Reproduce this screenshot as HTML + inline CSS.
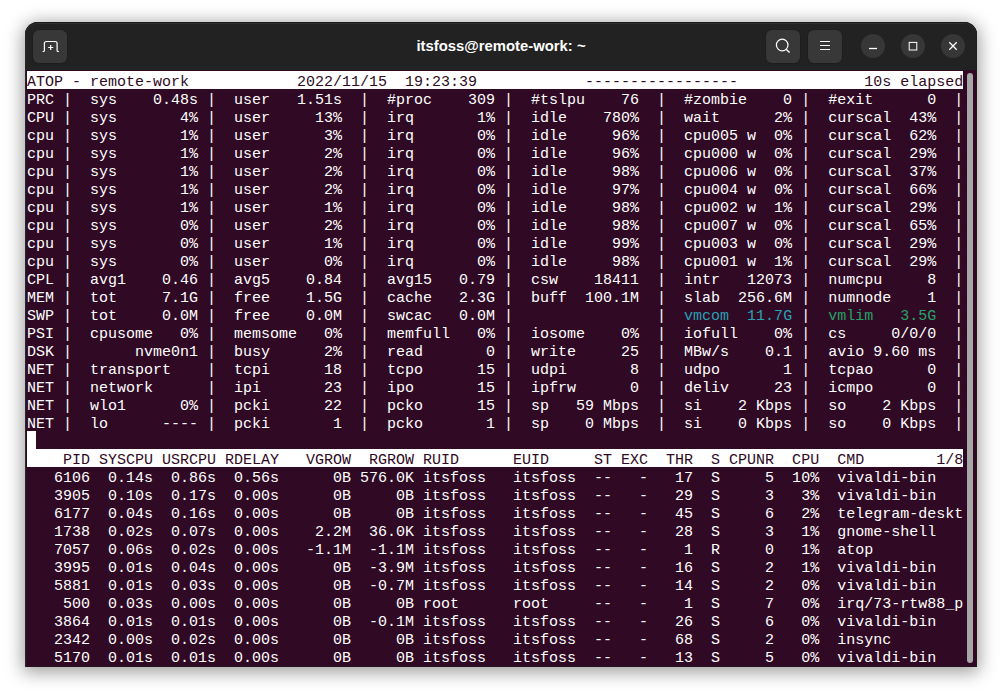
<!DOCTYPE html>
<html lang="en">
<head>
<meta charset="utf-8">
<title>itsfoss@remote-work: ~</title>
<style>
html,body{margin:0;padding:0;}
body{width:1002px;height:695px;background:#ffffff;overflow:hidden;position:relative;font-family:"Liberation Sans",sans-serif;}
#win{position:absolute;left:25px;top:22px;width:952px;height:645px;border-radius:13px 13px 0 0;background:#300a24;
 box-shadow:0 3px 18px 2px rgba(0,0,0,0.40);}
#win:after{content:"";position:absolute;left:0;top:0;right:0;bottom:0;border-radius:13px 13px 0 0;box-shadow:inset 1px 0 0 #282828,inset -1px 0 0 rgba(30,30,30,.55),inset 0 -1px 0 rgba(30,30,30,.55),inset 0 1px 0 #1b1b1b;pointer-events:none;}
#bar{position:absolute;left:0;top:0;width:952px;height:48px;background:#222222;border-radius:13px 13px 0 0;box-shadow:inset 0 2px 0 rgba(255,255,255,0.06);}
#title{position:absolute;left:0;top:0;width:952px;height:48px;line-height:49px;text-align:center;color:#ffffff;font-weight:bold;font-size:14.85px;letter-spacing:0px;}
.btn{position:absolute;top:7.5px;width:34px;height:33px;border-radius:6px;background:#383838;box-shadow:0 0 0 1px rgba(0,0,0,0.12);}
.circ{position:absolute;top:12px;width:24px;height:24px;border-radius:50%;background:#373737;}
svg{position:absolute;left:0;top:0;overflow:visible;}
#term{position:absolute;left:2px;top:49px;width:936px;height:594px;}
#pre{position:absolute;left:0;top:3px;margin:0;font-family:"Liberation Mono","DejaVu Sans Mono",monospace;font-size:15px;line-height:18px;color:#ffffff;white-space:pre;}
.inv{color:#300a24;}
.cy{color:#2aa1b3;}
.gr{color:#26a269;}
.hl{position:absolute;left:0;width:936px;height:18px;background:#ffffff;}
#cur{position:absolute;left:0;top:360px;width:9px;height:18px;background:#ffffff;}
#sb{position:absolute;left:942px;top:51px;width:6px;height:590px;border-radius:3px;background:#a8a6a7;}
</style>
</head>
<body>
<div id="win">
 <div id="bar">
  <div id="title">itsfoss@remote-work: ~</div>
  <div class="btn" style="left:8px"></div>
  <div class="btn" style="left:741px"></div>
  <div class="btn" style="left:783px"></div>
  <div class="circ" style="left:836px"></div>
  <div class="circ" style="left:876px"></div>
  <div class="circ" style="left:916px"></div>
  <svg width="952" height="48" viewBox="25 22 952 48" fill="none" stroke="#ffffff" stroke-width="1.2" stroke-linecap="butt">
   <path d="M42.6 51.5 h0.9 q0.9 0 0.9 -0.9 v-7.1 q0 -2 2 -2 h8.7 q2 0 2 2 v7.1 q0 0.9 0.9 0.9 h0.9"/>
   <path d="M50.7 45 v5 M48.2 47.5 h5"/>
   <circle cx="782.2" cy="45" r="5.8"/>
   <path d="M786.4 49.4 l3.2 3.2" stroke-width="1.4"/>
   <path d="M820 41.5 h10 M820 45.5 h10 M820 49.5 h10" stroke-width="1.1"/>
   <path d="M869 48.5 h8" stroke-width="1.3"/>
   <rect x="909.2" y="42.4" width="7.6" height="7.6" stroke-width="1"/>
   <path d="M949.3 42.3 l7.4 7.4 M956.7 42.3 l-7.4 7.4" stroke-width="1.3"/>
  </svg>
 </div>
 <div id="term">
  <div class="hl" style="top:0"></div>
  <div class="hl" style="top:378px"></div>
  <div id="cur"></div>
<pre id="pre"><span class="inv">ATOP - remote-work            2022/11/15  19:23:39            -----------------              10s elapsed</span>
PRC |  sys    0.48s |  user   1.51s  |  #proc    309 |  #tslpu    76  |  #zombie    0 |  #exit      0  |
CPU |  sys       4% |  user     13%  |  irq       1% |  idle    780%  |  wait      2% |  curscal  43%  |
cpu |  sys       1% |  user      3%  |  irq       0% |  idle     96%  |  cpu005 w  0% |  curscal  62%  |
cpu |  sys       1% |  user      2%  |  irq       0% |  idle     96%  |  cpu000 w  0% |  curscal  29%  |
cpu |  sys       1% |  user      2%  |  irq       0% |  idle     98%  |  cpu006 w  0% |  curscal  37%  |
cpu |  sys       1% |  user      2%  |  irq       0% |  idle     97%  |  cpu004 w  0% |  curscal  66%  |
cpu |  sys       1% |  user      1%  |  irq       0% |  idle     98%  |  cpu002 w  1% |  curscal  29%  |
cpu |  sys       0% |  user      2%  |  irq       0% |  idle     98%  |  cpu007 w  0% |  curscal  65%  |
cpu |  sys       0% |  user      1%  |  irq       0% |  idle     99%  |  cpu003 w  0% |  curscal  29%  |
cpu |  sys       0% |  user      0%  |  irq       0% |  idle     98%  |  cpu001 w  1% |  curscal  29%  |
CPL |  avg1    0.46 |  avg5    0.84  |  avg15   0.79 |  csw    18411  |  intr   12073 |  numcpu     8  |
MEM |  tot     7.1G |  free    1.5G  |  cache   2.3G |  buff  100.1M  |  slab  256.6M |  numnode    1  |
SWP |  tot     0.0M |  free    0.0M  |  swcac   0.0M |                |  <span class="cy">vmcom  11.7G</span> |  <span class="gr">vmlim   3.5G</span>  |
PSI |  cpusome   0% |  memsome   0%  |  memfull   0% |  iosome    0%  |  iofull    0% |  cs     0/0/0  |
DSK |       nvme0n1 |  busy      2%  |  read       0 |  write     25  |  MBw/s    0.1 |  avio 9.60 ms  |
NET |  transport    |  tcpi      18  |  tcpo      15 |  udpi       8  |  udpo       1 |  tcpao      0  |
NET |  network      |  ipi       23  |  ipo       15 |  ipfrw      0  |  deliv     23 |  icmpo      0  |
NET |  wlo1      0% |  pcki      22  |  pcko      15 |  sp   59 Mbps  |  si    2 Kbps |  so    2 Kbps  |
NET |  lo      ---- |  pcki       1  |  pcko       1 |  sp    0 Mbps  |  si    0 Kbps |  so    0 Kbps  |

<span class="inv">    PID SYSCPU USRCPU RDELAY   VGROW  RGROW RUID      EUID     ST EXC  THR  S CPUNR  CPU  CMD        1/8</span>
   6106  0.14s  0.86s  0.56s      0B 576.0K itsfoss   itsfoss  --   -   17  S     5  10%  vivaldi-bin
   3905  0.10s  0.17s  0.00s      0B     0B itsfoss   itsfoss  --   -   29  S     3   3%  vivaldi-bin
   6177  0.04s  0.16s  0.00s      0B     0B itsfoss   itsfoss  --   -   45  S     6   2%  telegram-deskt
   1738  0.02s  0.07s  0.00s    2.2M  36.0K itsfoss   itsfoss  --   -   28  S     3   1%  gnome-shell
   7057  0.06s  0.02s  0.00s   -1.1M  -1.1M itsfoss   itsfoss  --   -    1  R     0   1%  atop
   3995  0.01s  0.04s  0.00s      0B  -3.9M itsfoss   itsfoss  --   -   16  S     2   1%  vivaldi-bin
   5881  0.01s  0.03s  0.00s      0B  -0.7M itsfoss   itsfoss  --   -   14  S     2   0%  vivaldi-bin
    500  0.03s  0.00s  0.00s      0B     0B root      root     --   -    1  S     7   0%  irq/73-rtw88_p
   3864  0.01s  0.01s  0.00s      0B  -0.1M itsfoss   itsfoss  --   -   26  S     6   0%  vivaldi-bin
   2342  0.00s  0.02s  0.00s      0B     0B itsfoss   itsfoss  --   -   68  S     2   0%  insync
   5170  0.01s  0.01s  0.00s      0B     0B itsfoss   itsfoss  --   -   13  S     5   0%  vivaldi-bin</pre>
 </div>
 <div id="sb"></div>
</div>
</body>
</html>
